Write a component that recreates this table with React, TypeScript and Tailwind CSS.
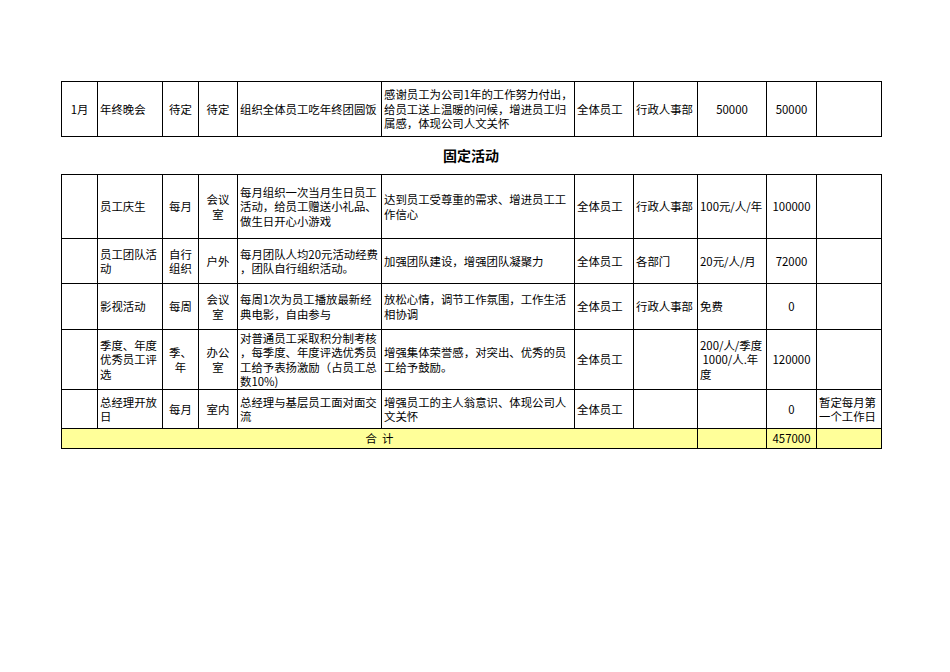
import React from "react";

type Row = {
  month?: string;
  name: string[];
  freq: string[];
  place: string[];
  content: string[];
  purpose: string[];
  who: string;
  dept: string;
  std: string[];
  budget: string;
  note: string[];
  h: string;
};

const widths = [36, 65, 36, 39, 144, 193, 59, 64, 69, 50, 65];

const fixedRows: Row[] = [
  {
    name: ["员工庆生"],
    freq: ["每月"],
    place: ["会议", "室"],
    content: ["每月组织一次当月生日员工", "活动，给员工赠送小礼品、", "做生日开心小游戏"],
    purpose: ["达到员工受尊重的需求、增进员工工", "作信心"],
    who: "全体员工",
    dept: "行政人事部",
    std: ["100元/人/年"],
    budget: "100000",
    note: [],
    h: "h-[64px]",
  },
  {
    name: ["员工团队活", "动"],
    freq: ["自行", "组织"],
    place: ["户外"],
    content: ["每月团队人均20元活动经费", "，团队自行组织活动。"],
    purpose: ["加强团队建设，增强团队凝聚力"],
    who: "全体员工",
    dept: "各部门",
    std: ["20元/人/月"],
    budget: "72000",
    note: [],
    h: "h-[45px]",
  },
  {
    name: ["影视活动"],
    freq: ["每周"],
    place: ["会议", "室"],
    content: ["每周1次为员工播放最新经", "典电影，自由参与"],
    purpose: ["放松心情，调节工作氛围，工作生活", "相协调"],
    who: "全体员工",
    dept: "行政人事部",
    std: ["免费"],
    budget: "0",
    note: [],
    h: "h-[46px]",
  },
  {
    name: ["季度、年度", "优秀员工评", "选"],
    freq: ["季、", "年"],
    place: ["办公", "室"],
    content: [
      "对普通员工采取积分制考核",
      "，每季度、年度评选优秀员",
      "工给予表扬激励（占员工总",
      "数10%)",
    ],
    purpose: ["增强集体荣誉感，对突出、优秀的员", "工给予鼓励。"],
    who: "全体员工",
    dept: "",
    std: ["200/人/季度", "\u00a01000/人.年", "度"],
    budget: "120000",
    note: [],
    h: "h-[60px]",
  },
  {
    name: ["总经理开放", "日"],
    freq: ["每月"],
    place: ["室内"],
    content: ["总经理与基层员工面对面交", "流"],
    purpose: ["增强员工的主人翁意识、体现公司人", "文关怀"],
    who: "全体员工",
    dept: "",
    std: [],
    budget: "0",
    note: ["暂定每月第", "一个工作日"],
    h: "h-[39px]",
  },
];

function Lines({ lines }: { lines: string[] }) {
  return (
    <>
      {lines.map((l, i) => (
        <div key={i}>{l}</div>
      ))}
    </>
  );
}

const cell = "border border-black px-[2px] py-0 align-middle whitespace-nowrap overflow-hidden";

function Cols() {
  return (
    <colgroup>
      {widths.map((w, i) => (
        <col key={i} style={{ width: w }} />
      ))}
    </colgroup>
  );
}

export default function App() {
  return (
    <div
      className="w-[950px] h-[672px] bg-white text-black text-[11.4px] leading-[14.5px] pt-[81px] pl-[61px]"
      style={{ fontFamily: '"Noto Sans CJK SC", "Noto Sans", sans-serif' }}
    >
      {/* 年终 */}
      <table className="table-fixed border-collapse w-[820px]">
        <Cols />
        <tbody>
          <tr className="h-[55px]">
            <td className={`${cell} text-center`}>1月</td>
            <td className={cell}>年终晚会</td>
            <td className={`${cell} text-center`}>待定</td>
            <td className={`${cell} text-center`}>待定</td>
            <td className={cell}>组织全体员工吃年终团圆饭</td>
            <td className={cell}>
              <Lines
                lines={[
                  "感谢员工为公司1年的工作努力付出，",
                  "给员工送上温暖的问候，增进员工归",
                  "属感，体现公司人文关怀",
                ]}
              />
            </td>
            <td className={cell}>全体员工</td>
            <td className={cell}>行政人事部</td>
            <td className={`${cell} text-center`}>50000</td>
            <td className={`${cell} text-center`}>50000</td>
            <td className={cell}></td>
          </tr>
        </tbody>
      </table>

      <div className="w-[820px] h-[37px] flex items-center justify-center text-[14px] font-bold">
        固定活动
      </div>

      {/* 固定活动 */}
      <table className="table-fixed border-collapse w-[820px]">
        <Cols />
        <tbody>
          {fixedRows.map((r, i) => (
            <tr key={i} className={r.h}>
              <td className={`${cell} text-center`}>{r.month}</td>
              <td className={cell}>
                <Lines lines={r.name} />
              </td>
              <td className={`${cell} text-center`}>
                <Lines lines={r.freq} />
              </td>
              <td className={`${cell} text-center`}>
                <Lines lines={r.place} />
              </td>
              <td className={cell}>
                <Lines lines={r.content} />
              </td>
              <td className={cell}>
                <Lines lines={r.purpose} />
              </td>
              <td className={cell}>{r.who}</td>
              <td className={cell}>{r.dept}</td>
              <td className={cell}>
                <Lines lines={r.std} />
              </td>
              <td className={`${cell} text-center`}>{r.budget}</td>
              <td className={cell}>
                <Lines lines={r.note} />
              </td>
            </tr>
          ))}
          <tr className="h-[20px] bg-[#ffff99]">
            <td colSpan={8} className={`${cell} text-center`}>
              合&nbsp;&nbsp;计
            </td>
            <td className={cell}></td>
            <td className={`${cell} text-center`}>457000</td>
            <td className={cell}></td>
          </tr>
        </tbody>
      </table>
    </div>
  );
}
